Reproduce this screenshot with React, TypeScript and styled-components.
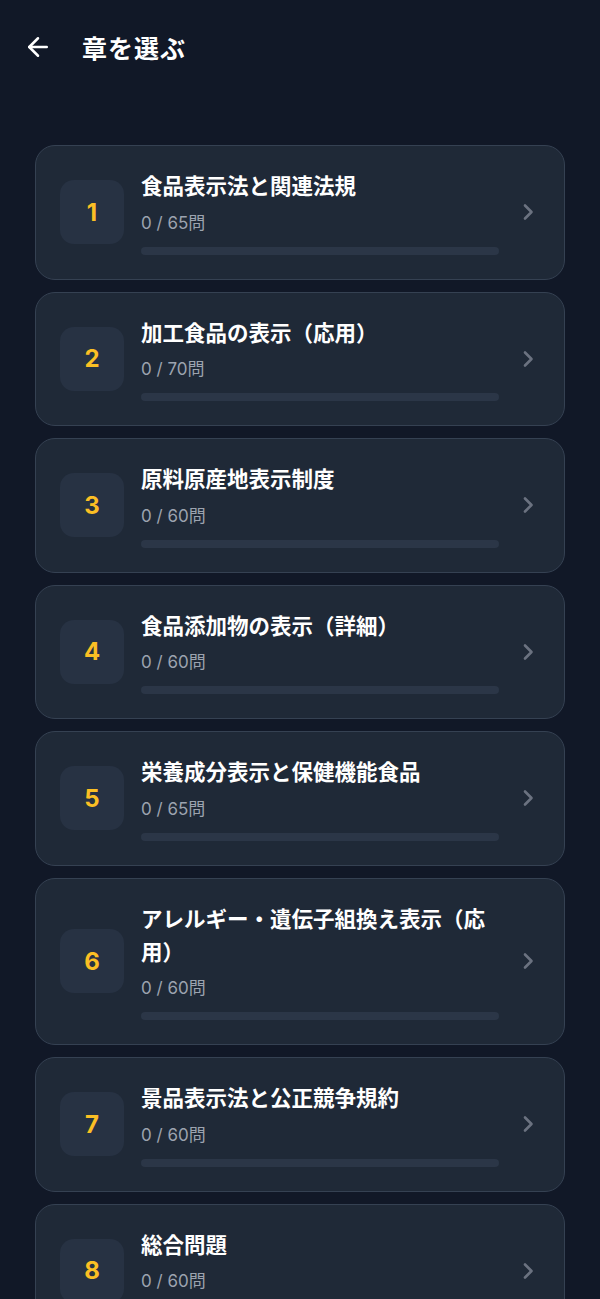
import styled, { createGlobalStyle } from "styled-components";

const chapters = [
  { title: "食品表示法と関連法規", total: 65 },
  { title: "加工食品の表示（応用）", total: 70 },
  { title: "原料原産地表示制度", total: 60 },
  { title: "食品添加物の表示（詳細）", total: 60 },
  { title: "栄養成分表示と保健機能食品", total: 65 },
  { title: "アレルギー・遺伝子組換え表示（応用）", total: 60 },
  { title: "景品表示法と公正競争規約", total: 60 },
  { title: "総合問題", total: 60 },
];

const GlobalStyle = createGlobalStyle`
  html, body {
    margin: 0;
    padding: 0;
    background: #111827;
  }
  body {
    font-family: Inter, "Noto Sans CJK JP", sans-serif;
    color: #ffffff;
  }
`;

const Page = styled.div`
  min-height: 1299px;
  background: #111827;
`;

const Header = styled.header`
  display: flex;
  align-items: center;
  gap: 28px;
  height: 94px;
  padding: 0 22px;
  box-sizing: border-box;
`;

const BackButton = styled.button`
  display: flex;
  align-items: center;
  justify-content: center;
  width: 32px;
  height: 32px;
  padding: 0;
  border: none;
  background: none;
  color: #ffffff;
  cursor: pointer;
`;

const HeaderTitle = styled.h1`
  margin: 0;
  font-size: 25px;
  font-weight: 700;
  letter-spacing: 1px;
`;

const List = styled.div`
  display: flex;
  flex-direction: column;
  gap: 12px;
  padding: 51px 35px 40px;
`;

const Card = styled.div`
  display: flex;
  align-items: center;
  gap: 17px;
  padding: 24px;
  background: #1f2937;
  border: 1px solid #354152;
  border-radius: 20px;
  cursor: pointer;
`;

const NumberBox = styled.div`
  flex: none;
  display: flex;
  align-items: center;
  justify-content: center;
  width: 64px;
  height: 64px;
  border-radius: 14px;
  background: #273243;
  color: #fbbf24;
  font-size: 24px;
  font-weight: 700;
`;

const Body = styled.div`
  flex: 1;
  min-width: 0;
  display: flex;
  flex-direction: column;
`;

const Title = styled.div`
  font-size: 21.5px;
  line-height: 33px;
  font-weight: 700;
  color: #ffffff;
`;

const Count = styled.div`
  margin-top: 7.5px;
  font-size: 17px;
  line-height: 24px;
  color: #9ca3af;
`;

const Track = styled.div`
  margin-top: 12px;
  height: 8px;
  border-radius: 4px;
  background: #2b3647;
  overflow: hidden;
`;

const Fill = styled.div`
  height: 100%;
  background: #fbbf24;
`;

const Chevron = styled.div`
  flex: none;
  display: flex;
  align-items: center;
  justify-content: center;
  width: 24px;
  height: 28px;
  color: #6b7280;
`;

export default function App() {
  return (
    <Page>
      <GlobalStyle />
      <Header>
        <BackButton aria-label="戻る">
          <svg width="30" height="30" viewBox="0 0 24 24" fill="none" stroke="currentColor" strokeWidth="2" strokeLinecap="round" strokeLinejoin="round">
            <path d="M19 12H5" />
            <path d="M12 19l-7-7 7-7" />
          </svg>
        </BackButton>
        <HeaderTitle>章を選ぶ</HeaderTitle>
      </Header>
      <List>
        {chapters.map((c, i) => (
          <Card key={i}>
            <NumberBox>{i + 1}</NumberBox>
            <Body>
              <Title>{c.title}</Title>
              <Count>0 / {c.total}問</Count>
              <Track>
                <Fill style={{ width: "0%" }} />
              </Track>
            </Body>
            <Chevron>
              <svg width="26" height="26" viewBox="0 0 24 24" fill="none" stroke="currentColor" strokeWidth="2.6" strokeLinecap="round" strokeLinejoin="round">
                <path d="M9 5.5l6.5 6.5-6.5 6.5" />
              </svg>
            </Chevron>
          </Card>
        ))}
      </List>
    </Page>
  );
}
